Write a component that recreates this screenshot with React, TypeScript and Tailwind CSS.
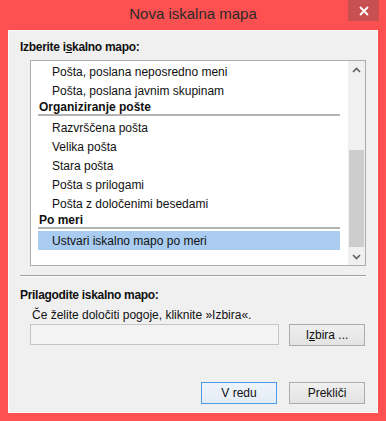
import React from "react";

const font = { fontFamily: '"Liberation Sans", Arial, sans-serif' };

function Item({ label, selected }: { label: string; selected?: boolean }) {
  return (
    <div
      className={`h-[19px] flex items-center pl-[14px] text-[12px] text-[#111] ${
        selected ? "bg-[#a9ccf0]" : ""
      }`}
    >
      {label}
    </div>
  );
}

function Heading({ label }: { label: string }) {
  return (
    <div className="mb-[2px]">
      <div className="h-[14px] flex items-center pl-[1px] text-[12px] font-bold text-[#111]">
        {label}
      </div>
      <div className="h-[2px] bg-[#b4b4b4]" />
    </div>
  );
}

function Chevron({ up }: { up?: boolean }) {
  return (
    <svg width="9" height="6" viewBox="0 0 9 6">
      <path
        d={up ? "M1 5 L4.5 1.5 L8 5" : "M1 1 L4.5 4.5 L8 1"}
        fill="none"
        stroke="#606060"
        strokeWidth="1.6"
      />
    </svg>
  );
}

export default function App() {
  return (
    <div
      className="w-[386px] h-[421px] bg-[#fd5050] flex flex-col px-[8px] pb-[8px]"
      style={font}
    >
      <div className="relative h-[30px] flex items-center justify-center">
        <span className="text-[15px] text-[#2a2a2a] -mt-[2px]">Nova iskalna mapa</span>
        <div className="absolute top-0 -right-[1px] w-[31px] h-[21px] bg-[#c75050] flex items-center justify-center">
          <svg width="10" height="10" viewBox="0 0 10 10">
            <path d="M1 1 L9 9 M9 1 L1 9" stroke="#fff" strokeWidth="1.8" />
          </svg>
        </div>
      </div>

      <div className="flex-1 bg-[#f0f0f0] border border-[#fafafa] flex flex-col">
        <div className="mt-[8px] ml-[11px] h-[16px] flex items-center text-[12px] font-bold tracking-[-0.3px] text-[#111]">
          Izberite i<span className="underline">s</span>kalno mapo:
        </div>

        <div className="mt-[5px] ml-[21px] w-[336px] h-[206px] border border-[#adadad] bg-white flex">
          <div className="flex-1 overflow-hidden pl-[7px] pr-[8px] pt-[1px]">
            <Item label="Pošta, poslana neposredno meni" />
            <Item label="Pošta, poslana javnim skupinam" />
            <Heading label="Organiziranje pošte" />
            <Item label="Razvrščena pošta" />
            <Item label="Velika pošta" />
            <Item label="Stara pošta" />
            <Item label="Pošta s prilogami" />
            <Item label="Pošta z določenimi besedami" />
            <Heading label="Po meri" />
            <Item label="Ustvari iskalno mapo po meri" selected />
          </div>
          <div className="w-[17px] bg-[#f0f0f0] flex flex-col">
            <div className="h-[17px] flex items-center justify-center">
              <Chevron up />
            </div>
            <div className="flex-1 flex flex-col">
              <div className="mt-auto mb-[1px] mx-[1px] h-[97px] bg-[#cdcdcd]" />
            </div>
            <div className="h-[17px] flex items-center justify-center">
              <Chevron />
            </div>
          </div>
        </div>

        <div className="mt-[9px] ml-[11px] w-[346px] border-t border-[#a0a0a0] border-b border-b-white" />

        <div className="mt-[10px] ml-[11px] h-[16px] flex items-center text-[12px] font-bold tracking-[-0.3px] text-[#111]">
          Prilagodite iskalno mapo:
        </div>
        <div className="mt-[4px] ml-[23px] h-[16px] flex items-center text-[12px] text-[#111]">
          Če želite določiti pogoje, kliknite »Izbira«.
        </div>

        <div className="mt-[1px] ml-[21px] flex items-start">
          <div className="w-[249px] h-[21px] bg-[#f3f3f3] border border-[#c5c5c5]" />
          <button className="ml-[10px] w-[76px] h-[22px] border border-[#acacac] bg-gradient-to-b from-[#efefef] to-[#e3e3e3] text-[12px] text-[#111]">
            I<span className="underline">z</span>bira ...
          </button>
        </div>

        <div className="mt-auto mb-[8px] flex justify-end gap-[12px] pr-[12px]">
          <button className="w-[76px] h-[22px] border border-[#4a9be8] bg-gradient-to-b from-[#eef4fb] to-[#e4ecf5] text-[12px] text-[#111]">
            V redu
          </button>
          <button className="w-[76px] h-[22px] border border-[#acacac] bg-gradient-to-b from-[#efefef] to-[#e3e3e3] text-[12px] text-[#111]">
            Prekliči
          </button>
        </div>
      </div>
    </div>
  );
}
